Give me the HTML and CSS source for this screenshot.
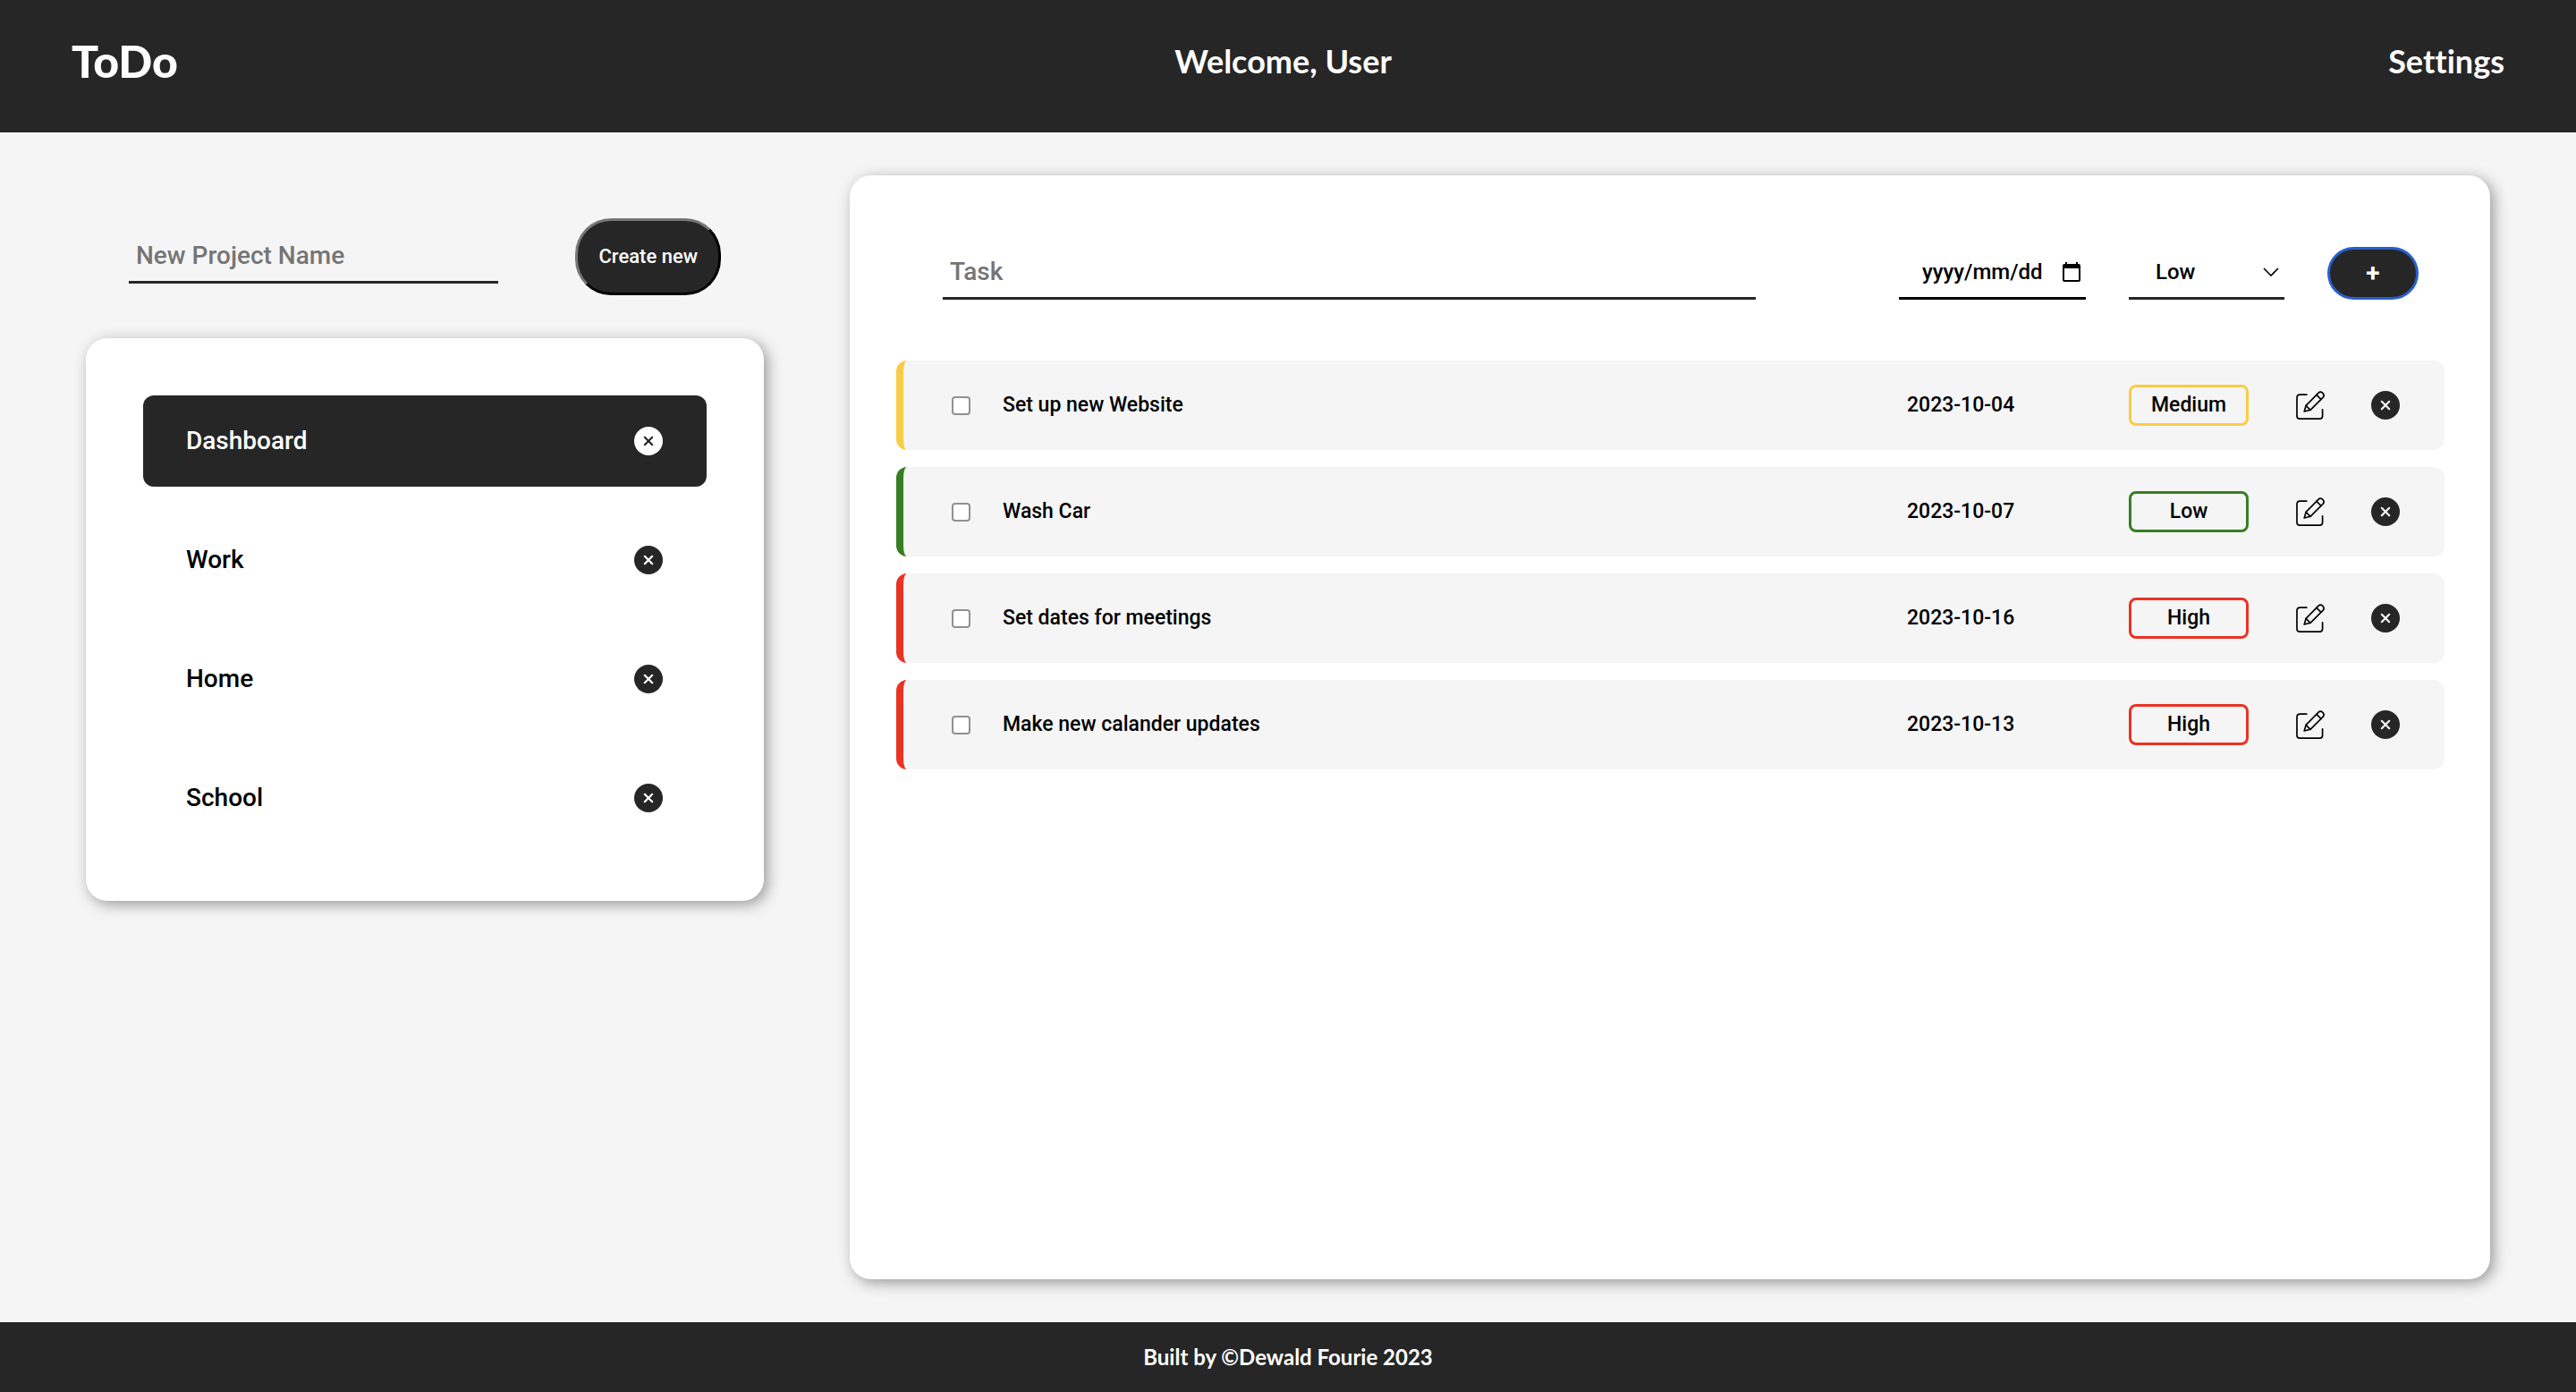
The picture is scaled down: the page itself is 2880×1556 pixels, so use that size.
FILE: index.html
```html
<!DOCTYPE html>
<html lang="en">
<head>
<meta charset="utf-8">
<meta name="viewport" content="width=device-width, initial-scale=1">
<title>ToDo</title>
<link rel="stylesheet" href="styles.css">
</head>
<body>
<svg class="sprite" aria-hidden="true">
  <symbol id="close" viewBox="0 0 32 32">
    <circle cx="16" cy="16" r="16" fill="currentColor"/>
    <path class="cross" d="M11.8 11.8l8.4 8.4M20.2 11.8l-8.4 8.4" fill="none" stroke-width="2.2" stroke-linecap="round"/>
  </symbol>
  <symbol id="edit" viewBox="0 0 32 32">
    <g fill="none" stroke="currentColor" stroke-width="1.7" stroke-linecap="round" stroke-linejoin="round">
      <path d="M11.8 4.2H4.5Q1 4.2 1 7.7V28Q1 31.2 4.2 31.2H26.4Q29.6 31.2 29.6 28V20.8"/>
      <path d="M9.2 23l1.9-6.6L24.9 2.3Q27.2 0 29.8 2.4Q32.4 5 30 7.3L16 21.3Z"/>
      <path d="M11.1 16.4L16 21.3M22.9 4.4L27.9 9.4"/>
    </g>
  </symbol>
</svg>

<header class="site-header">
  <h1 class="logo">ToDo</h1>
  <p class="welcome">Welcome, User</p>
  <a class="settings" href="#settings">Settings</a>
</header>

<main class="layout">
  <aside class="sidebar">
    <form class="project-form">
      <input class="field project-name" type="text" placeholder="New Project Name" aria-label="New Project Name">
      <button class="create" type="button">Create new</button>
    </form>
    <ul class="card projects">
      <li class="project active"><span>Dashboard</span><button class="icon-button" type="button" aria-label="Delete Dashboard"><svg><use href="#close"/></svg></button></li>
      <li class="project"><span>Work</span><button class="icon-button" type="button" aria-label="Delete Work"><svg><use href="#close"/></svg></button></li>
      <li class="project"><span>Home</span><button class="icon-button" type="button" aria-label="Delete Home"><svg><use href="#close"/></svg></button></li>
      <li class="project"><span>School</span><button class="icon-button" type="button" aria-label="Delete School"><svg><use href="#close"/></svg></button></li>
    </ul>
  </aside>

  <section class="card board">
    <form class="task-form">
      <input class="field task-name" type="text" placeholder="Task" aria-label="Task">
      <div class="date-field">
        <input class="date-input" type="text" placeholder="yyyy/mm/dd" aria-label="Due date">
        <button class="date-button" type="button" aria-label="Open calendar">
          <svg viewBox="0 0 20 22"><path fill="currentColor" fill-rule="evenodd" d="M3 0h2v2h10V0h2v2h1a2 2 0 0 1 2 2v16a2 2 0 0 1-2 2H2a2 2 0 0 1-2-2V4a2 2 0 0 1 2-2h1zM2 7v13h16V7z"/></svg>
        </button>
      </div>
      <div class="select-field">
        <select class="priority-select" aria-label="Priority">
          <option>Low</option>
          <option>Medium</option>
          <option>High</option>
        </select>
        <svg class="chevron" viewBox="0 0 18 10"><path d="M1 1l8 8 8-8" fill="none" stroke="currentColor" stroke-width="1.6"/></svg>
      </div>
      <button class="add" type="button" aria-label="Add task">+</button>
    </form>

    <ul class="tasks">
      <li class="task medium">
        <input class="check" type="checkbox" id="task-1">
        <label for="task-1">Set up new Website</label>
        <time datetime="2023-10-04">2023-10-04</time>
        <span class="badge">Medium</span>
        <button class="icon-button edit" type="button" aria-label="Edit"><svg><use href="#edit"/></svg></button>
        <button class="icon-button" type="button" aria-label="Delete"><svg><use href="#close"/></svg></button>
      </li>
      <li class="task low">
        <input class="check" type="checkbox" id="task-2">
        <label for="task-2">Wash Car</label>
        <time datetime="2023-10-07">2023-10-07</time>
        <span class="badge">Low</span>
        <button class="icon-button edit" type="button" aria-label="Edit"><svg><use href="#edit"/></svg></button>
        <button class="icon-button" type="button" aria-label="Delete"><svg><use href="#close"/></svg></button>
      </li>
      <li class="task high">
        <input class="check" type="checkbox" id="task-3">
        <label for="task-3">Set dates for meetings</label>
        <time datetime="2023-10-16">2023-10-16</time>
        <span class="badge">High</span>
        <button class="icon-button edit" type="button" aria-label="Edit"><svg><use href="#edit"/></svg></button>
        <button class="icon-button" type="button" aria-label="Delete"><svg><use href="#close"/></svg></button>
      </li>
      <li class="task high">
        <input class="check" type="checkbox" id="task-4">
        <label for="task-4">Make new calander updates</label>
        <time datetime="2023-10-13">2023-10-13</time>
        <span class="badge">High</span>
        <button class="icon-button edit" type="button" aria-label="Edit"><svg><use href="#edit"/></svg></button>
        <button class="icon-button" type="button" aria-label="Delete"><svg><use href="#close"/></svg></button>
      </li>
    </ul>
  </section>
</main>

<footer class="site-footer">Built by ©Dewald Fourie 2023</footer>
</body>
</html>
```
FILE: styles.css
```css
:root {
  --dark: #262626;
  --light: #f5f5f5;
  --yellow: #f8cd46;
  --green: #377e22;
  --red: #ea3323;
}

* {
  box-sizing: border-box;
  margin: 0;
  padding: 0;
}

body {
  display: flex;
  flex-direction: column;
  min-height: 100vh;
  background: var(--light);
  color: #000;
  font: 500 24px/32px Roboto, sans-serif;
}

ul {
  list-style: none;
}

input,
select,
button {
  font: inherit;
  color: inherit;
  background: none;
  border: 0;
  border-radius: 0;
}

svg {
  display: block;
}

.sprite {
  display: none;
}

.site-header {
  display: flex;
  justify-content: space-between;
  align-items: center;
  padding: 38px 80px 50px;
  background: var(--dark);
  color: #fff;
  font: 700 36px/60px Lato, sans-serif;
  font-variant-ligatures: none;
}

.logo {
  font-size: 50px;
  font-weight: 900;
}

.settings {
  color: inherit;
  text-decoration: none;
}

.layout {
  flex: 1;
  display: grid;
  grid-template-columns: 758fr 1834fr;
  gap: 96px;
  padding: 48px 96px;
}

.card {
  background: #fff;
  border-radius: 24px;
  box-shadow: 4px 4px 16px #999;
}

.field {
  border-bottom: 3px solid var(--dark);
  padding: 0 8px;
  font-size: 28px;
}

.field::placeholder {
  color: #757575;
  opacity: 1;
}

.project-form {
  display: flex;
  align-items: center;
  justify-content: space-between;
  gap: 48px;
  padding: 48px;
}

.project-name {
  flex: 0 1 413px;
  min-width: 0;
  height: 60px;
}

.create {
  padding: 24px 23px;
  border: 3px outset #767676;
  border-color: #767676 #1f1f1f #1f1f1f #767676;
  border-radius: 40px;
  background: var(--dark);
  color: #fff;
  font-size: 22px;
}

.projects {
  display: grid;
  gap: 31px;
  padding: 64px;
}

.project {
  display: flex;
  align-items: center;
  justify-content: space-between;
  padding: 35px 49px 35px 48px;
  border-radius: 12px;
  font-size: 28px;
}

.active {
  background: var(--dark);
  color: #fff;
}

.icon-button {
  width: 32px;
  height: 32px;
  color: var(--dark);
}

.icon-button svg {
  width: 32px;
  height: 32px;
  overflow: visible;
}

.cross {
  stroke: var(--cross, #fff);
}

.active .icon-button {
  --cross: #262626;
  color: #fff;
}

.board {
  padding: 80px 51px 48px 52px;
}

.task-form {
  display: flex;
  align-items: stretch;
  gap: 48px;
  height: 59px;
  padding: 0 29px 0 52px;
}

.task-name {
  flex: 1;
  min-width: 0;
  margin-right: 112px;
}

.date-field {
  display: flex;
  align-items: center;
  width: 209px;
  padding: 0 6px 0 26px;
  border-bottom: 3px solid #000;
}

.date-input {
  flex: 1;
  min-width: 0;
}

.date-input::placeholder {
  color: #000;
  opacity: 1;
}

.date-button {
  width: 20px;
  height: 22px;
}

.select-field {
  display: grid;
  align-items: center;
  width: 174px;
  border-bottom: 3px solid var(--dark);
}

.priority-select,
.chevron {
  grid-area: 1 / 1;
}

.priority-select {
  appearance: none;
  height: 56px;
  padding: 0 30px;
}

.chevron {
  justify-self: end;
  width: 18px;
  height: 10px;
  margin-right: 6px;
  pointer-events: none;
}

.add {
  width: 102px;
  border: 3px solid #2a5fcb;
  border-radius: 30px;
  background: var(--dark);
  color: #fff;
  font-size: 28px;
  font-weight: 700;
}

.tasks {
  display: grid;
  gap: 19px;
  margin-top: 68px;
  font-size: 23px;
}

.task {
  display: grid;
  grid-template-columns: 57px 1fr 248px 134px 137px 32px;
  align-items: center;
  min-height: 100px;
  padding: 0 50px 0 54px;
  border-left: 8px solid var(--priority);
  border-radius: 12px;
  background: var(--light);
}

.task .icon-button {
  --cross: #f5f5f5;
}

.task .edit {
  justify-self: center;
  color: #000;
}

.check {
  appearance: none;
  width: 21px;
  height: 21px;
  border: 2px solid #909090;
  border-radius: 4px;
  background: #fff;
}

.check:checked {
  background: var(--dark);
}

.badge {
  padding: 4px 0;
  border: 3px solid var(--priority);
  border-radius: 8px;
  text-align: center;
}

.medium {
  --priority: var(--yellow);
}

.low {
  --priority: var(--green);
}

.high {
  --priority: var(--red);
}

.site-footer {
  padding: 23px;
  background: var(--dark);
  color: #fff;
  text-align: center;
  font: 700 24px/32px Lato, sans-serif;
}
```
